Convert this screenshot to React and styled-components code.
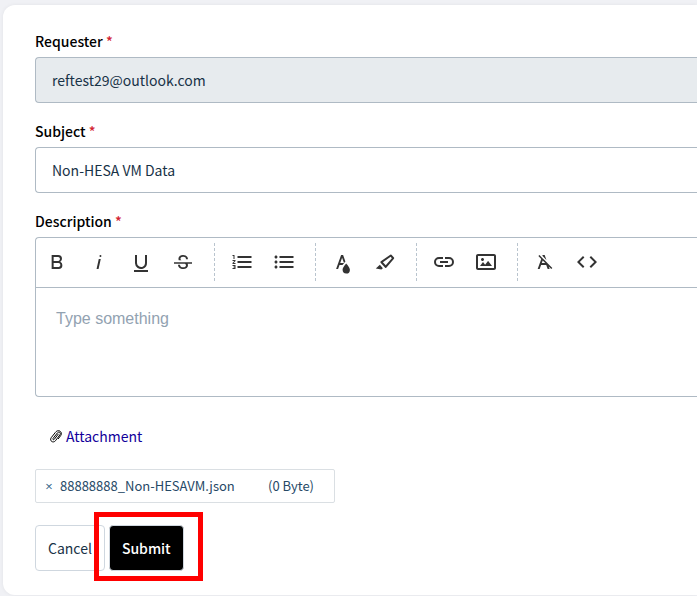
import React from "react";
import styled, { createGlobalStyle } from "styled-components";

const GlobalStyle = createGlobalStyle`
    * {
        box-sizing: border-box;
    }
    body {
        margin: 0;
        overflow-x: hidden;
        background-color: #f0f1f5;
        color: #000000;
        font-family: "Noto Sans CJK JP", "Noto Sans", sans-serif;
        font-size: 14px;
        line-height: 24px;
    }
    button, input, textarea {
        margin: 0;
        font: inherit;
    }
`

const Page = styled.div`
    padding: 5px 0 1px 3px;
`

const Form = styled.form`
    padding: 24px 0 24px 32px;
    background-color: #ffffff;
    border-radius: 12px 0 0 12px;
    box-shadow: 0 0 4px rgba(0, 0, 0, 0.06);
`

const Field = styled.div`
    display: flex;
    flex-direction: column;
    gap: 4px;
    margin-bottom: 16px;
`

const Label = styled.label`
    font-weight: 500;
`

const Required = styled.span`
    color: #d3232f;
`

const Input = styled.input`
    width: 100%;
    height: 46px;
    padding: 0 16px;
    color: #183247;
    background-color: #ffffff;
    border: 1px solid #afbac4;
    border-right: 0;
    border-radius: 4px 0 0 4px;
    outline: 0;
    &:disabled {
        background-color: #e7ebee;
    }
`

const Editor = styled.div`
    border: 1px solid #afbac4;
    border-right: 0;
    border-radius: 4px 0 0 4px;
`

const Toolbar = styled.div`
    display: flex;
    padding: 5px 0 6px;
    border-bottom: 1px solid #afbac4;
`

const Group = styled.div`
    display: flex;
    & + & {
        margin-left: 10px;
        padding-left: 6px;
        border-left: 1px dashed #b9c4ce;
    }
`

const ToolButton = styled.button`
    display: flex;
    align-items: center;
    justify-content: center;
    width: 42px;
    height: 38px;
    padding: 0;
    background: none;
    border: 0;
    cursor: pointer;
`

const ToolIcon = styled.svg`
    width: 24px;
    height: 24px;
    fill: #333333;
`

const TextArea = styled.textarea`
    display: block;
    width: 100%;
    height: 108px;
    padding: 19px 20px;
    color: #183247;
    background: none;
    border: 0;
    outline: 0;
    resize: none;
    font-family: "Liberation Sans", Arial, sans-serif;
    font-size: 16px;
    &::placeholder {
        color: #92a2b1;
        opacity: 1;
    }
`

const AttachmentLink = styled.a`
    display: flex;
    align-items: center;
    gap: 3px;
    width: fit-content;
    margin: 27px 0 21px 14px;
    color: #12009b;
    text-decoration: none;
`

const ClipIcon = styled.svg`
    width: 14px;
    height: 16px;
    fill: none;
    stroke: #000000;
    stroke-width: 1;
    stroke-linecap: round;
    stroke-linejoin: round;
`

const FileChip = styled.div`
    display: flex;
    align-items: center;
    width: 300px;
    height: 34px;
    padding: 0 20px 1px 8px;
    color: #264966;
    border: 1px solid #dadfe3;
    border-radius: 2px;
    font-size: 13px;
`

const RemoveButton = styled.button`
    width: 10px;
    margin-right: 6px;
    padding: 0;
    color: #2f6488;
    background: none;
    border: 0;
    font-family: "Open Sans", sans-serif;
    text-align: center;
    cursor: pointer;
`

const FileSize = styled.span`
    margin-left: auto;
`

const Actions = styled.div`
    display: flex;
    gap: 4px;
    margin-top: 22px;
`

const Button = styled.button`
    height: 46px;
    padding: 0 12px;
    color: ${props => props.$primary ? "#ffffff" : "#183247"};
    background-color: ${props => props.$primary ? "#000000" : "#ffffff"};
    border: 1px solid #cfd7df;
    border-radius: 4px;
    font-weight: ${props => props.$primary ? 500 : 400};
    cursor: pointer;
`

const Highlight = styled.div`
    position: relative;
    &::after {
        content: "";
        position: absolute;
        top: -13px;
        right: -19px;
        bottom: -10px;
        left: -15px;
        border: 5px solid #ff0000;
        pointer-events: none;
    }
`

const toolGroups = [
    [
        { name: "Bold", path: "M15.25,11.8h0A3.68,3.68,0,0,0,17,9a3.93,3.93,0,0,0-3.86-4H6.65V19h7a3.74,3.74,0,0,0,3.7-3.78V15.1A3.64,3.64,0,0,0,15.25,11.8ZM8.65,7h4.2a2.09,2.09,0,0,1,2,1.3,2.09,2.09,0,0,1-1.37,2.61,2.23,2.23,0,0,1-.63.09H8.65Zm4.6,10H8.65V13h4.6a2.09,2.09,0,0,1,2,1.3,2.09,2.09,0,0,1-1.37,2.61A2.23,2.23,0,0,1,13.25,17Z" },
        { name: "Italic", path: "M11.76,9h2l-2.2,10h-2Zm1.68-4a1,1,0,1,0,1,1,1,1,0,0,0-1-1Z" },
        { name: "Underline", path: "M19,20v2H5V20Zm-3-6.785a4,4,0,0,1-5.74,3.4A3.75,3.75,0,0,1,8,13.085V5.005H6v8.21a6,6,0,0,0,8,5.44,5.851,5.851,0,0,0,4-5.65v-8H16ZM16,5v0h2V5ZM8,5H6v0H8Z" },
        { name: "Strikethrough", path: "M3,12.20294H21v1.5H16.63422a3.59782,3.59782,0,0,1,.34942,1.5929,3.252,3.252,0,0,1-1.31427,2.6997A5.55082,5.55082,0,0,1,12.20251,19a6.4421,6.4421,0,0,1-2.62335-.539,4.46335,4.46335,0,0,1-1.89264-1.48816,3.668,3.668,0,0,1-.67016-2.15546V14.704H9.02v.11334a2.18275,2.18275,0,0,0,.85413,1.83069,3.69,3.69,0,0,0,2.32836.67926,3.38778,3.38778,0,0,0,2.07666-.5462,1.73346,1.73346,0,0,0,.7013-1.46655,1.69749,1.69749,0,0,0-.647-1.43439,3.00525,3.00525,0,0,0-.27491-.17725H3ZM16.34473,7.05981A4.18163,4.18163,0,0,0,14.6236,5.5462,5.627,5.627,0,0,0,12.11072,5,5.16083,5.16083,0,0,0,8.74719,6.06213,3.36315,3.36315,0,0,0,7.44006,8.76855a3.22923,3.22923,0,0,0,.3216,1.42786h2.59668c-.08338-.05365-.18537-.10577-.25269-.16064a1.60652,1.60652,0,0,1-.65283-1.30036,1.79843,1.79843,0,0,1,.68842-1.5108,3.12971,3.12971,0,0,1,1.96948-.55243,3.04779,3.04779,0,0,1,2.106.6687,2.35066,2.35066,0,0,1,.736,1.83258v.11341h2.00317V9.17346A3.90013,3.90013,0,0,0,16.34473,7.05981Z" }
    ],
    [
        { name: "Ordered List", path: "M2.5,16h2v.5h-1v1h1V18h-2v1h3V15h-3Zm1-7h1V5h-2V6h1Zm-1,2H4.3L2.5,13.1V14h3V13H3.7l1.8-2.1V10h-3Zm5-5V8h14V6Zm0,12h14V16H7.5Zm0-5h14V11H7.5Z" },
        { name: "Unordered List", path: "M4,10.5c-.8,0-1.5.7-1.5,1.5s.7,1.5,1.5,1.5,1.5-.7,1.5-1.5S4.8,10.5,4,10.5ZM4,5.5C3.2,5.5,2.5,6.2,2.5,7S3.2,8.5,4,8.5,5.5,7.8,5.5,7,4.8,5.5,4,5.5ZM4,15.5c-.8,0-1.5.7-1.5,1.5s.7,1.5,1.5,1.5,1.5-.7,1.5-1.5S4.8,15.5,4,15.5ZM7.5,6V8h14V6Zm0,12h14V16H7.5Zm0-5h14V11H7.5Z" }
    ],
    [
        { name: "Text Color", path: "M15.2,13.494s-3.6,3.9-3.6,6.3a3.65,3.65,0,0,0,7.3.1v-.1C18.9,17.394,15.2,13.494,15.2,13.494Zm-1.47-1.357.669-.724L12.1,5h-2l-5,14h2l1.43-4h2.943A24.426,24.426,0,0,1,13.726,12.137ZM11.1,7.8l1.86,5.2H9.244Z" },
        { name: "Background Color", path: "M9.91752,12.24082l7.74791-5.39017,1.17942,1.29591-6.094,7.20747L9.91752,12.24082M7.58741,12.652l4.53533,4.98327a.93412.93412,0,0,0,1.39531-.0909L20.96943,8.7314A.90827.90827,0,0,0,20.99075,7.533l-2.513-2.76116a.90827.90827,0,0,0-1.19509-.09132L7.809,11.27135A.93412.93412,0,0,0,7.58741,12.652ZM2.7939,18.52772,8.41126,19.5l1.47913-1.34617-3.02889-3.328Z" }
    ],
    [
        { name: "Insert Link", path: "M11,17H7A5,5,0,0,1,7,7h4V9H7a3,3,0,0,0,0,6h4ZM17,7H13V9h4a3,3,0,0,1,0,6H13v2h4A5,5,0,0,0,17,7Zm-1,4H8v2h8Z" },
        { name: "Insert Image", path: "M14.2,11l3.8,5H6l3-3.9l2.1,2.7L14,11H14.2z M8.5,11c0.8,0,1.5-0.7,1.5-1.5S9.3,8,8.5,8S7,8.7,7,9.5C7,10.3,7.7,11,8.5,11z M22,6v12c0,1.1-0.9,2-2,2H4c-1.1,0-2-0.9-2-2V6c0-1.1,0.9-2,2-2h16C21.1,4,22,4.9,22,6z M20,8.8V6H4v12h16V8.8z" }
    ],
    [
        { name: "Clear Formatting", path: "M11.48,10.09l-1.2-1.21L8.8,7.41,6.43,5,5.37,6.1,8.25,9,4.66,19h2l1.43-4h5.14l1.43,4h2l-.89-2.51L18.27,19l1.07-1.06L14.59,13.2ZM8.8,13l.92-2.56L12.27,13Zm.56-7.15L9.66,5h2l1.75,4.9Z" },
        { name: "Code View", path: "M9.4,16.6,4.8,12,9.4,7.4,8,6,2,12l6,6Zm5.2,0L19.2,12,14.6,7.4,16,6l6,6-6,6Z" }
    ]
]

const FieldLabel = ({ htmlFor, children }) => (
    <Label htmlFor={htmlFor}>{children} <Required>*</Required></Label>
)

function App() {
    return (
        <Page>
            <GlobalStyle />
            <Form onSubmit={(event) => event.preventDefault()}>
                <Field>
                    <FieldLabel htmlFor="requester">Requester</FieldLabel>
                    <Input id="requester" type="email" defaultValue="reftest29@outlook.com" disabled />
                </Field>
                <Field>
                    <FieldLabel htmlFor="subject">Subject</FieldLabel>
                    <Input id="subject" type="text" defaultValue="Non-HESA VM Data" />
                </Field>
                <Field>
                    <FieldLabel htmlFor="description">Description</FieldLabel>
                    <Editor>
                        <Toolbar>
                            {toolGroups.map((tools, index) => (
                                <Group key={index}>
                                    {tools.map((tool) => (
                                        <ToolButton key={tool.name} type="button" aria-label={tool.name}>
                                            <ToolIcon viewBox="0 0 24 24"><path d={tool.path} /></ToolIcon>
                                        </ToolButton>
                                    ))}
                                </Group>
                            ))}
                        </Toolbar>
                        <TextArea id="description" placeholder="Type something" />
                    </Editor>
                </Field>
                <AttachmentLink href="#attachment">
                    <ClipIcon viewBox="0 0 14 16">
                        <path d="M9.2 6.2 L5.2 11.4 C4.6 12.2 3.4 11.4 4 10.5 L8.4 4.9 C9.9 3.1 12.3 4.8 11 6.7 L6.6 12.6 C4.3 15.6 .1 12.9 2.2 9.7 L6.3 4.5 C8.2 1.9 10.8 2.5 11.7 3.8 C12.7 5 12.6 6.4 11.7 7.6 L9.4 10.7" />
                    </ClipIcon>
                    Attachment
                </AttachmentLink>
                <FileChip>
                    <RemoveButton type="button" aria-label="Remove file">×</RemoveButton>
                    <span>88888888_Non-HESAVM.json</span>
                    <FileSize>(0 Byte)</FileSize>
                </FileChip>
                <Actions>
                    <Button type="button">Cancel</Button>
                    <Highlight>
                        <Button type="submit" $primary>Submit</Button>
                    </Highlight>
                </Actions>
            </Form>
        </Page>
    )
}

export default App;
